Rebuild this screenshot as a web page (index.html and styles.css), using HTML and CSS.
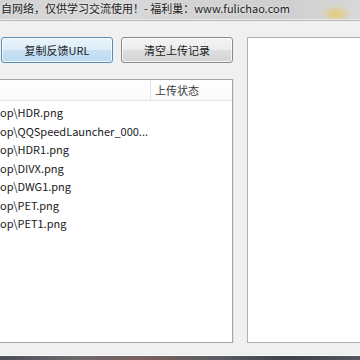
FILE: index.html
```html
<!DOCTYPE html>
<html lang="zh-CN">
<head>
<meta charset="utf-8">
<link rel="stylesheet" href="styles.css">
</head>
<body>
<div class="window">
  <div class="titlebar"><span class="title">自网络，仅供学习交流使用！- 福利巢：www.fulichao.com</span></div>
  <div class="client">
    <div class="left">
      <div class="buttons">
        <button class="btn btn-hot">复制反馈URL</button>
        <button class="btn">清空上传记录</button>
      </div>
      <div class="list">
        <div class="list-header">
          <div class="col-file"></div>
          <div class="col-status">上传状态</div>
        </div>
        <div class="rows">
          <div class="row">op\HDR.png</div>
          <div class="row">op\QQSpeedLauncher_000...</div>
          <div class="row">op\HDR1.png</div>
          <div class="row">op\DIVX.png</div>
          <div class="row">op\DWG1.png</div>
          <div class="row">op\PET.png</div>
          <div class="row">op\PET1.png</div>
        </div>
      </div>
    </div>
    <div class="panel"></div>
  </div>
  <div class="taskbar"></div>
</div>
</body>
</html>
```

FILE: styles.css
```css
html, body {
  margin: 0;
  padding: 0;
}
body {
  width: 360px;
  height: 360px;
  overflow: hidden;
  background: #f0f0f0;
  font-family: "Noto Sans CJK SC", "Noto Sans", sans-serif;
}
.window {
  width: 360px;
  height: 360px;
  display: flex;
  flex-direction: column;
  overflow: hidden;
}
.titlebar {
  height: 20px;
  flex: none;
  border-bottom: 1px solid #b9b9b9;
  background:
    radial-gradient(ellipse 16px 9px at 336px 14px, rgba(232, 200, 90, 0.75), rgba(232, 200, 90, 0) 100%),
    linear-gradient(90deg, #d3d3d3 0%, #d9d9d9 30%, #d2d2d2 60%, #cfcfcf 78%, #d8d8d8 100%);
  box-shadow: inset 0 -1px 0 #e8e8e8;
  overflow: hidden;
  white-space: nowrap;
}
.title {
  display: block;
  padding-left: 1px;
  font-size: 11px;
  line-height: 17px;
  color: #1c1c1c;
  text-shadow: 0 0 3px rgba(255, 255, 255, 0.7);
}
.client {
  flex: none;
  height: 322px;
  display: flex;
  padding-top: 16px;
  box-sizing: border-box;
}
.left {
  width: 233px;
  flex: none;
  display: flex;
  flex-direction: column;
}
.buttons {
  display: flex;
  gap: 8px;
  padding-left: 1px;
  height: 26px;
}
.btn {
  width: 112px;
  height: 26px;
  box-sizing: border-box;
  border: 1px solid #8a8a8a;
  border-radius: 3px;
  background: linear-gradient(180deg, #f4f4f4 0%, #ececec 48%, #dedede 52%, #d4d4d4 100%);
  box-shadow: inset 0 0 0 1px rgba(255, 255, 255, 0.75);
  font-family: "Noto Sans CJK SC", "Noto Sans", sans-serif;
  font-size: 11px;
  color: #1a1a1a;
  padding: 0;
  line-height: 24px;
}
.btn-hot {
  width: 112px;
  border-color: #5b8db6;
  background: linear-gradient(180deg, #eaf5fc 0%, #dcedf9 48%, #c8e2f4 52%, #bcdaf0 100%);
}
.list {
  margin-top: 16px;
  margin-left: -10px;
  height: 264px;
  box-sizing: border-box;
  border: 1px solid #a5a5a5;
  box-shadow: 1px 0 0 #e2e2e2;
  background: #ffffff;
  display: flex;
  flex-direction: column;
}
.list-header {
  height: 20px;
  flex: none;
  display: flex;
  border-bottom: 1px solid #e5e5e5;
  background: linear-gradient(180deg, #ffffff 0%, #fbfbfb 100%);
}
.col-file {
  width: 159px;
  border-right: 1px solid #e3e3e3;
}
.col-status {
  padding-left: 4px;
  font-size: 11px;
  line-height: 20px;
  color: #3a3a3a;
}
.rows {
  padding-top: 2px;
  padding-left: 9px;
}
.row {
  height: 18.5px;
  line-height: 18.5px;
  font-size: 11px;
  color: #1a1a1a;
  white-space: nowrap;
}
.panel {
  margin-left: 14px;
  width: 130px;
  flex: none;
  height: 306px;
  box-sizing: border-box;
  border: 1px solid #b0b0b0;
  background: #ffffff;
}
.taskbar {
  margin-top: 12px;
  height: 6px;
  flex: none;
  border-top: 1px solid #fafafa;
  background: linear-gradient(90deg, #4a4e55 0%, #6b6a6e 20%, #7a5f5c 40%, #5a5d63 60%, #3e4148 80%, #555860 100%);
}
```
